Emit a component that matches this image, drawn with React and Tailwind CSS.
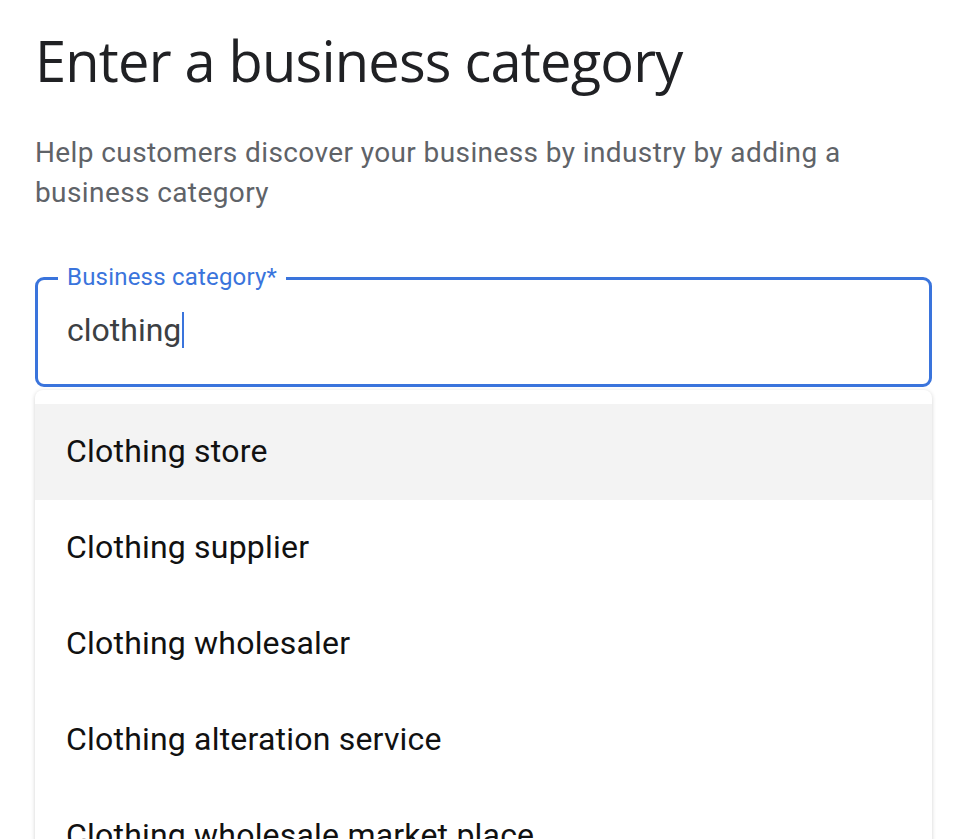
import { useState } from "react";

const options = [
  "Clothing store",
  "Clothing supplier",
  "Clothing wholesaler",
  "Clothing alteration service",
  "Clothing wholesale market place",
];

export default function App() {
  const [value] = useState("clothing");

  return (
    <div className="h-[839px] overflow-hidden bg-white px-[35px] pt-[24px] font-['Roboto',sans-serif]">
      {/* heading */}
      <h1 className="text-[56px] leading-[72px] text-[#202124] font-['Open_Sans',sans-serif] tracking-[-0.8px]">
        Enter a business category
      </h1>
      <p className="mt-[37px] w-[840px] text-[28px] leading-[40px] tracking-[0.4px] text-[#5f6368]">
        Help customers discover your business by industry by adding a business category
      </p>

      {/* input */}
      <div className="relative mt-[64px] w-[897px] h-[110px] rounded-[9px] border-[3px] border-[#3a74dc]">
        <span className="absolute -top-[18px] left-[20px] bg-white px-[9px] text-[24px] leading-[30px] tracking-[0.2px] text-[#3a74dc]">
          Business category*
        </span>
        <div className="flex items-center h-full pl-[29px] pb-[4px] text-[32px] text-[#3c4043]">
          {value}
          <span className="ml-[1px] inline-block w-[2px] h-[36px] bg-[#3a74dc]" />
        </div>
      </div>

      {/* suggestions */}
      <div className="mt-[3px] w-[897px] rounded-t-[8px] bg-white pt-[14px] shadow-[0_1px_4px_rgba(0,0,0,0.18)]">
        {options.map((o, i) => (
          <div
            key={o}
            className={`flex items-center h-[96px] pl-[31px] pb-[2px] text-[32px] tracking-[0.2px] text-[#111111] ${i === 0 ? "bg-[#f3f3f3]" : ""}`}
          >
            {o}
          </div>
        ))}
      </div>
    </div>
  );
}
